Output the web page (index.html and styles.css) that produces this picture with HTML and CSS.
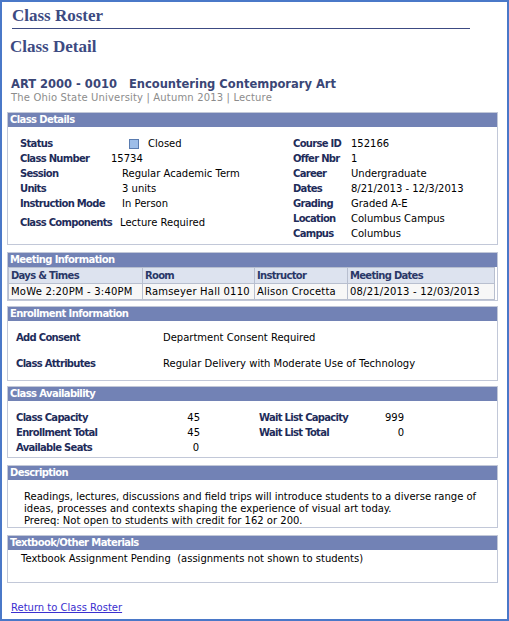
FILE: index.html
```html
<!DOCTYPE html>
<html>
<head>
<meta charset="utf-8">
<link rel="stylesheet" href="styles.css">
</head>
<body>
<div class="frame">
  <div class="page-title">Class Roster</div>
  <div class="sub-title">Class Detail</div>

  <div class="course">
    <div class="course-name">ART 2000 - 0010&nbsp;&nbsp; Encountering Contemporary Art</div>
    <div class="course-meta">The Ohio State University | Autumn 2013 | Lecture</div>
  </div>

  <div class="box details">
    <div class="bar">Class Details</div>
    <div class="detail-cols">
      <div class="col-left">
        <div class="row"><span class="lbl">Status</span><span class="val status"><span class="sq"></span>Closed</span></div>
        <div class="row"><span class="lbl">Class Number</span><span class="val num">15734</span></div>
        <div class="row"><span class="lbl">Session</span><span class="val">Regular Academic Term</span></div>
        <div class="row"><span class="lbl">Units</span><span class="val">3 units</span></div>
        <div class="row"><span class="lbl">Instruction Mode</span><span class="val">In Person</span></div>
        <div class="row comp"><span class="lbl">Class Components</span><span class="val compv">Lecture Required</span></div>
      </div>
      <div class="col-right">
        <div class="row"><span class="lbl">Course ID</span><span class="val">152166</span></div>
        <div class="row"><span class="lbl">Offer Nbr</span><span class="val">1</span></div>
        <div class="row"><span class="lbl">Career</span><span class="val">Undergraduate</span></div>
        <div class="row"><span class="lbl">Dates</span><span class="val">8/21/2013 - 12/3/2013</span></div>
        <div class="row"><span class="lbl">Grading</span><span class="val">Graded A-E</span></div>
        <div class="row"><span class="lbl">Location</span><span class="val">Columbus Campus</span></div>
        <div class="row"><span class="lbl">Campus</span><span class="val">Columbus</span></div>
      </div>
    </div>
  </div>

  <div class="box meeting">
    <div class="bar">Meeting Information</div>
    <table class="mtable">
      <tr class="thead"><th class="c1">Days &amp; Times</th><th class="c2">Room</th><th class="c3">Instructor</th><th class="c4">Meeting Dates</th></tr>
      <tr class="trow"><td>MoWe 2:20PM - 3:40PM</td><td>Ramseyer Hall 0110</td><td>Alison Crocetta</td><td>08/21/2013 - 12/03/2013</td></tr>
    </table>
  </div>

  <div class="box enroll">
    <div class="bar">Enrollment Information</div>
    <div class="enroll-body">
      <div class="erow"><span class="lbl">Add Consent</span><span class="val">Department Consent Required</span></div>
      <div class="erow"><span class="lbl">Class Attributes</span><span class="val">Regular Delivery with Moderate Use of Technology</span></div>
    </div>
  </div>

  <div class="box avail">
    <div class="bar">Class Availability</div>
    <div class="avail-body">
      <div class="arow"><span class="lbl">Class Capacity</span><span class="n1">45</span><span class="lbl l2">Wait List Capacity</span><span class="n2">999</span></div>
      <div class="arow"><span class="lbl">Enrollment Total</span><span class="n1">45</span><span class="lbl l2">Wait List Total</span><span class="n2">0</span></div>
      <div class="arow"><span class="lbl">Available Seats</span><span class="n1 seats">0</span></div>
    </div>
  </div>

  <div class="box desc">
    <div class="bar">Description</div>
    <div class="desc-body">Readings, lectures, discussions and field trips will introduce students to a diverse range of ideas, processes and contexts shaping the experience of visual art today.<br>Prereq: Not open to students with credit for 162 or 200.</div>
  </div>

  <div class="box text">
    <div class="bar">Textbook/Other Materials</div>
    <div class="text-body">Textbook Assignment Pending&nbsp; (assignments not shown to students)</div>
  </div>

  <div class="back"><a href="#">Return to Class Roster</a></div>
</div>
</body>
</html>
```

FILE: styles.css
```css
* { box-sizing: border-box; }
html, body { margin: 0; padding: 0; background: #fff; }
body { font-family: "DejaVu Sans", Verdana, sans-serif; font-size: 10px; color: #000; }

.frame {
  width: 509px;
  height: 621px;
  border: 2px solid #4a78c8;
  padding: 0 10px 0 5px;
  overflow: hidden;
}

.page-title {
  font-family: "Liberation Serif", "Times New Roman", serif;
  font-weight: bold;
  font-size: 17px;
  color: #3c4a82;
  margin: 0 27px 0 5px;
  padding: 6px 0 4px 0;
  border-bottom: 1px solid #3c4a82;
  line-height: 16px;
}
.sub-title {
  font-family: "Liberation Serif", "Times New Roman", serif;
  font-weight: bold;
  font-size: 17px;
  color: #3c4a82;
  margin: 10px 0 0 3px;
  line-height: 16px;
}

.course { margin: 22px 0 8px 4px; }
.course-name { font-weight: bold; font-size: 11.5px; color: #3a4676; line-height: 14px; }
.course-meta { font-size: 10px; letter-spacing: 0.16px; color: #8c8c8c; line-height: 12px; margin-top: 1px; }

.box {
  border: 1px solid #c2c8d8;
  width: 491px;
}
.bar {
  background: #7282b5;
  color: #fff;
  font-weight: bold;
  font-size: 10px;
  letter-spacing: -0.6px;
  height: 14px;
  line-height: 14px;
  padding-left: 2px;
}

.lbl { font-weight: bold; color: #1e2c5a; letter-spacing: -0.7px; white-space: nowrap; }
.val { color: #000; white-space: nowrap; }

.details { height: 133px; margin-bottom: 7px; }
.detail-cols { display: flex; padding: 10px 0 0 12px; }
.col-left { width: 273px; }
.col-right { flex: 1; }
.row { display: flex; height: 15px; line-height: 14px; }
.col-left .lbl { width: 102px; }
.col-right .lbl { width: 58px; }
.status { display: flex; align-items: center; padding-left: 7px; height: 14px; }
.sq { width: 10px; height: 10px; background: #9dbde8; border: 1px solid #5a7cb0; margin-right: 9px; }
.num { margin-left: -11px; }
.row.comp { margin-top: 4px; }
.compv { margin-left: -2px; }

.meeting { margin-bottom: 5px; }
.mtable { border-collapse: collapse; width: 487px; }
.mtable th, .mtable td { border: 1px solid #b8bfcf; padding: 0 2px; height: 16px; line-height: 14px; white-space: nowrap; text-align: left; }
.mtable th { background: #dde3ef; color: #2a3868; font-weight: bold; font-size: 10px; letter-spacing: -0.7px; }
.mtable td { background: #f7f7f7; font-size: 10px; letter-spacing: 0.2px; }
.c1 { width: 134px; }
.c2 { width: 112px; }
.c3 { width: 93px; }

.enroll { margin-bottom: 5px; }
.enroll-body { padding: 10px 0 9px 8px; }
.erow { display: flex; height: 14px; line-height: 14px; }
.erow + .erow { margin-top: 12px; }
.enroll-body .lbl { width: 147px; }

.avail { margin-bottom: 7px; }
.avail-body { padding: 10px 0 0 8px; height: 56px; }
.arow { display: flex; height: 15px; line-height: 14px; }
.arow .lbl { width: 160px; }
.n1 { width: 24px; text-align: right; }
.seats { width: 23px; }
.arow .l2 { width: 110px; margin-left: 59px; }
.n2 { width: 35px; text-align: right; }

.desc { margin-bottom: 7px; }
.desc-body { padding: 11px 10px 0 16px; height: 47px; line-height: 12px; color: #000; }

.text-body { padding: 2px 0 0 13px; height: 32px; line-height: 14px; }

.back { margin: 19px 0 0 4px; line-height: 12px; }
.back a { color: #3a2fcf; font-size: 10px; }
```
